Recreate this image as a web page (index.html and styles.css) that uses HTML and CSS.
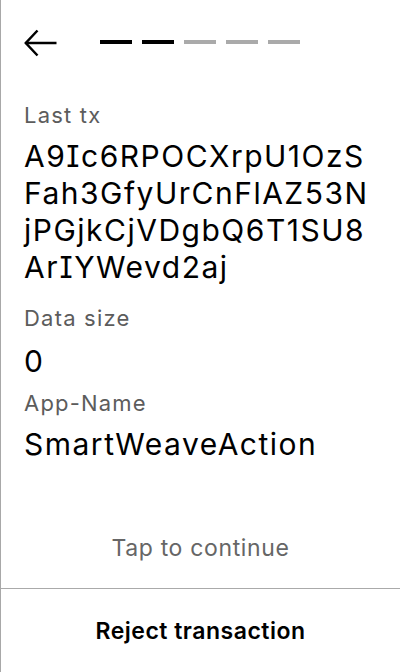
FILE: index.html
```html
<!DOCTYPE html>
<html lang="en">
<head>
<meta charset="utf-8">
<title>Transaction</title>
<link rel="stylesheet" href="styles.css">
</head>
<body>
<div class="screen">
  <header class="header">
    <svg class="back" width="34" height="28" viewBox="0 0 34 28" aria-label="Back">
      <path d="M1.5 14H32.5" fill="none" stroke="#000" stroke-width="2.5"/>
      <path d="M13.5 1.5L1.8 14L13.5 26.5" fill="none" stroke="#000" stroke-width="2.5"/>
    </svg>
    <div class="steps">
      <span class="step done"></span>
      <span class="step done"></span>
      <span class="step"></span>
      <span class="step"></span>
      <span class="step"></span>
    </div>
  </header>
  <main class="content">
    <div class="field field-long">
      <div class="label">Last tx</div>
      <div class="value">A9Ic6RPOCXrpU1OzS<br>Fah3GfyUrCnFlAZ53N<br>jPGjkCjVDgbQ6T1SU8<br>ArIYWevd2aj</div>
    </div>
    <div class="field field-short">
      <div class="label label-short">Data size</div>
      <div class="value">0</div>
    </div>
    <div class="field">
      <div class="label">App-Name</div>
      <div class="value">SmartWeaveAction</div>
    </div>
  </main>
  <div class="tap">Tap to continue</div>
  <footer class="footer">Reject transaction</footer>
</div>
</body>
</html>
```
FILE: styles.css
```css
html, body {
  margin: 0;
  padding: 0;
  background: #fff;
}
body {
  font-family: Inter, "Noto Sans", sans-serif;
  font-feature-settings: "cv08";
  color: #000;
}
.screen {
  height: 672px;
  box-sizing: border-box;
  border-left: 1px solid #a8a8a8;
  display: flex;
  flex-direction: column;
}
.header {
  padding: 29px 0 29px 23px;
  display: flex;
  align-items: center;
}
.back {
  display: block;
  flex: none;
}
.steps {
  display: flex;
  gap: 10px;
  margin-left: 42px;
  margin-top: -2px;
}
.step {
  width: 32px;
  height: 4px;
  background: #aaaaaa;
}
.step.done {
  background: #000;
}
.content {
  padding: 15px 23px 0;
  display: flex;
  flex-direction: column;
}
.field-long {
  margin-bottom: 18px;
}
.field-short {
  margin-bottom: 9px;
}
.label {
  font-size: 22px;
  line-height: 28px;
  letter-spacing: 1.2px;
  color: #5c5c5c;
  margin-bottom: 9px;
}
.label-short {
  margin-bottom: 11px;
}
.value {
  font-size: 30px;
  line-height: 37px;
  letter-spacing: 1.5px;
  color: #000;
}
.tap {
  margin-top: auto;
  text-align: center;
  font-size: 23px;
  line-height: 28px;
  letter-spacing: 0.65px;
  color: #666;
  padding-bottom: 26px;
}
.footer {
  height: 84px;
  box-sizing: border-box;
  border-top: 1px solid #aaaaaa;
  display: flex;
  align-items: center;
  justify-content: center;
  font-size: 23px;
  font-weight: 600;
  letter-spacing: 0.5px;
}
```
